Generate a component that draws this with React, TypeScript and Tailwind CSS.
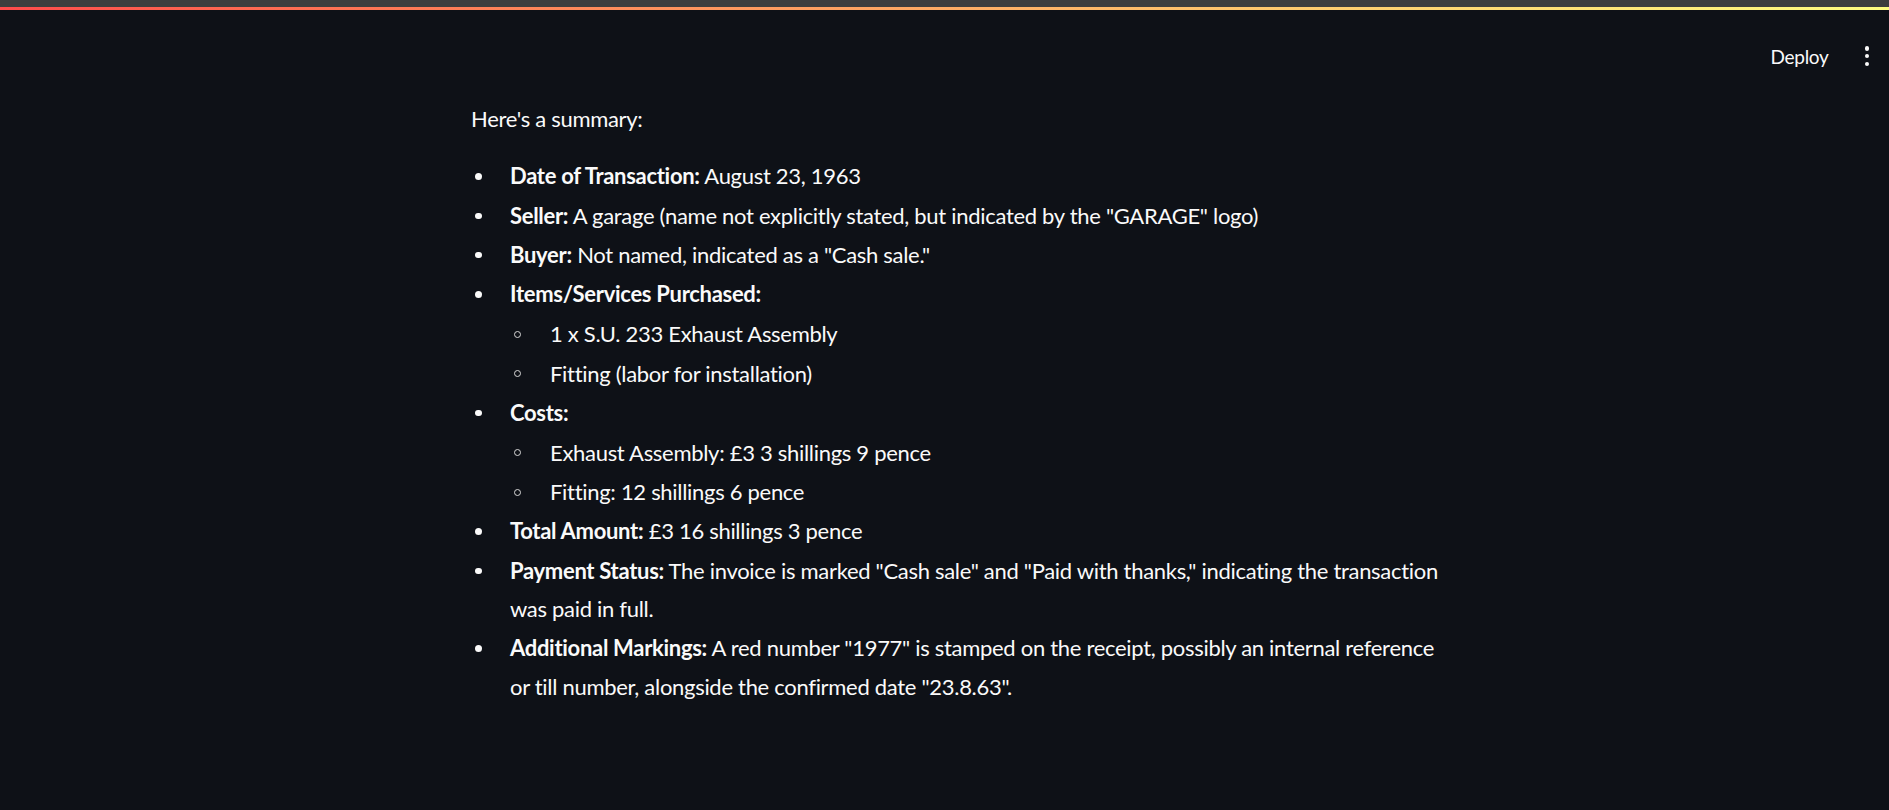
import React from "react";

type Item = {
  label?: string;
  text?: React.ReactNode;
  sub?: string[];
};

const items: Item[] = [
  { label: "Date of Transaction:", text: "August 23, 1963" },
  {
    label: "Seller:",
    text: 'A garage (name not explicitly stated, but indicated by the "GARAGE" logo)',
  },
  { label: "Buyer:", text: 'Not named, indicated as a "Cash sale."' },
  {
    label: "Items/Services Purchased:",
    sub: ["1 x S.U. 233 Exhaust Assembly", "Fitting (labor for installation)"],
  },
  {
    label: "Costs:",
    sub: ["Exhaust Assembly: £3 3 shillings 9 pence", "Fitting: 12 shillings 6 pence"],
  },
  { label: "Total Amount:", text: "£3 16 shillings 3 pence" },
  {
    label: "Payment Status:",
    text: (
      <>
        The invoice is marked "Cash sale" and "Paid with thanks," indicating the transaction
        <br />
        was paid in full.
      </>
    ),
  },
  {
    label: "Additional Markings:",
    text: (
      <>
        A red number "1977" is stamped on the receipt, possibly an internal reference
        <br />
        or till number, alongside the confirmed date "23.8.63".
      </>
    ),
  },
];

function Disc() {
  return (
    <span className="flex h-[38.4px] w-[39px] shrink-0 items-center pl-[4px]">
      <span className="h-[6.5px] w-[6.5px] rounded-full bg-[#fafafa]" />
    </span>
  );
}

function Circle() {
  return (
    <span className="flex h-[38.4px] w-[40px] shrink-0 items-center pl-[4px]">
      <span className="h-[7px] w-[7px] rounded-full border border-[#d8d8d8]" />
    </span>
  );
}

export default function App() {
  return (
    <div
      className="min-h-screen bg-[#0e1117] text-[#fafafa]"
      style={{ fontFamily: "Lato, sans-serif" }}
    >
      {/* top strip + streamlit decoration */}
      <div className="h-[7px] bg-[#3e3e3e]" />
      <div className="h-[3px] bg-gradient-to-r from-[#ff4b4b] to-[#fffd80]" />

      {/* header */}
      <header className="flex h-[90px] items-start justify-end pr-[20px] pt-[33px]">
        <span className="text-[19px] leading-[28px] tracking-[-0.3px]">Deploy</span>
        <button className="ml-[36px] mt-[3px] flex flex-col gap-[3.3px]" aria-label="Menu">
          <span className="h-[4.5px] w-[4.5px] rounded-full bg-[#fafafa]" />
          <span className="h-[4.5px] w-[4.5px] rounded-full bg-[#fafafa]" />
          <span className="h-[4.5px] w-[4.5px] rounded-full bg-[#fafafa]" />
        </button>
      </header>

      {/* main block */}
      <main className="ml-[471px] w-[1100px] text-[22px] leading-[38.4px] tracking-[-0.3px]">
        <p className="mb-[19px]">Here's a summary:</p>
        <ul className="flex flex-col gap-[0.9px]">
          {items.map((it, i) => (
            <li key={i} className="flex">
              <Disc />
              <div>
                <div>
                  <span className="font-bold">{it.label}</span>
                  {it.text && <> {it.text}</>}
                </div>
                {it.sub && (
                  <ul className="mt-[1.5px] flex flex-col gap-[0.9px]">
                    {it.sub.map((s, j) => (
                      <li key={j} className="flex">
                        <Circle />
                        <span>{s}</span>
                      </li>
                    ))}
                  </ul>
                )}
              </div>
            </li>
          ))}
        </ul>
      </main>
    </div>
  );
}
